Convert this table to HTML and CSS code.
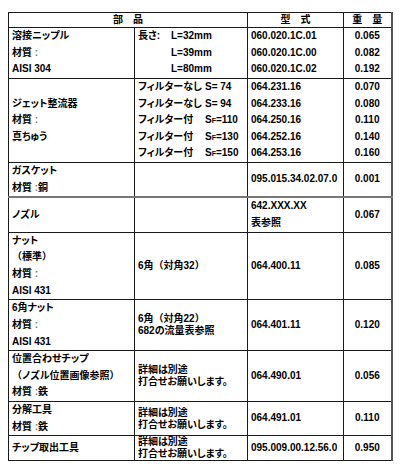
FILE: index.html
```html
<!DOCTYPE html>
<html lang="ja">
<head>
<meta charset="utf-8">
<link rel="stylesheet" href="styles.css">
</head>
<body>
<div class="page">
<table class="spec">
  <colgroup>
    <col class="c-part"><col class="c-desc"><col class="c-model"><col class="c-wt">
  </colgroup>
  <thead>
    <tr><th colspan="2">部　品</th><th>型　式</th><th>重　量</th></tr>
  </thead>
  <tbody>
    <tr>
      <td><div class="ln">溶接ニップル</div><div class="ln">材質<span class="colon"> :</span></div><div class="ln">AISI 304</div></td>
      <td>
        <div class="ln pair"><span class="k1">長さ:</span><span>L=32mm</span></div>
        <div class="ln pair"><span class="k1"></span><span>L=39mm</span></div>
        <div class="ln pair"><span class="k1"></span><span>L=80mm</span></div>
      </td>
      <td><div class="ln">060.020.1C.01</div><div class="ln">060.020.1C.00</div><div class="ln">060.020.1C.02</div></td>
      <td class="wt"><div class="ln">0.065</div><div class="ln">0.082</div><div class="ln">0.192</div></td>
    </tr>
    <tr>
      <td><div class="ln">ジェット整流器</div><div class="ln">材質<span class="colon"> :</span></div><div class="ln">真ちゅう</div></td>
      <td>
        <div class="ln pair"><span class="k2">フィルターなし</span><span>S= 74</span></div>
        <div class="ln pair"><span class="k2">フィルターなし</span><span>S= 94</span></div>
        <div class="ln pair"><span class="k2">フィルター付</span><span>S<span class="sf">F</span>=110</span></div>
        <div class="ln pair"><span class="k2">フィルター付</span><span>S<span class="sf">F</span>=130</span></div>
        <div class="ln pair"><span class="k2">フィルター付</span><span>S<span class="sf">F</span>=150</span></div>
      </td>
      <td><div class="ln">064.231.16</div><div class="ln">064.233.16</div><div class="ln">064.250.16</div><div class="ln">064.252.16</div><div class="ln">064.253.16</div></td>
      <td class="wt"><div class="ln">0.070</div><div class="ln">0.080</div><div class="ln">0.110</div><div class="ln">0.140</div><div class="ln">0.160</div></td>
    </tr>
    <tr class="gray-bottom">
      <td><div class="ln">ガスケット</div><div class="ln">材質<span class="colon"> :</span>銅</div></td>
      <td></td>
      <td><div class="ln">095.015.34.02.07.0</div></td>
      <td class="wt"><div class="ln">0.001</div></td>
    </tr>
    <tr>
      <td><div class="ln">ノズル</div></td>
      <td></td>
      <td><div class="ln">642.XXX.XX</div><div class="ln">表参照</div></td>
      <td class="wt"><div class="ln">0.067</div></td>
    </tr>
    <tr>
      <td><div class="ln">ナット</div><div class="ln"><span class="fw">（</span>標準<span class="fw">）</span></div><div class="ln">材質<span class="colon"> :</span></div><div class="ln">AISI 431</div></td>
      <td><div class="ln">6角<span class="fw">（</span>対角32<span class="fw">）</span></div></td>
      <td><div class="ln">064.400.11</div></td>
      <td class="wt"><div class="ln">0.085</div></td>
    </tr>
    <tr>
      <td><div class="ln">6角ナット</div><div class="ln">材質<span class="colon"> :</span></div><div class="ln">AISI 431</div></td>
      <td><div class="wrap">6角<span class="fw">（</span>対角22<span class="fw">）</span><br>682の流量表参照</div></td>
      <td><div class="ln">064.401.11</div></td>
      <td class="wt"><div class="ln">0.120</div></td>
    </tr>
    <tr>
      <td><div class="ln">位置合わせチップ</div><div class="ln"><span class="fw">（</span>ノズル位置画像参照<span class="fw">）</span></div><div class="ln">材質<span class="colon"> :</span>鉄</div></td>
      <td><div class="wrap">詳細は別途<br>打合せお願いします。</div></td>
      <td><div class="ln">064.490.01</div></td>
      <td class="wt"><div class="ln">0.056</div></td>
    </tr>
    <tr>
      <td><div class="ln">分解工具</div><div class="ln">材質<span class="colon"> :</span>鉄</div></td>
      <td><div class="wrap">詳細は別途<br>打合せお願いします。</div></td>
      <td><div class="ln">064.491.01</div></td>
      <td class="wt"><div class="ln">0.110</div></td>
    </tr>
    <tr>
      <td><div class="ln">チップ取出工具</div></td>
      <td><div class="wrap">詳細は別途<br>打合せお願いします。</div></td>
      <td><div class="ln">095.009.00.12.56.0</div></td>
      <td class="wt"><div class="ln">0.950</div></td>
    </tr>
  </tbody>
</table>
</div>
</body>
</html>
```
FILE: styles.css
```css
html, body {
  margin: 0;
  padding: 0;
  background: #ffffff;
}
.page {
  padding: 12px 0 0 8px;
}
.spec {
  border-collapse: collapse;
  table-layout: fixed;
  width: 383px;
  font-family: "Liberation Sans", "Noto Sans CJK JP", sans-serif;
  font-feature-settings: "palt";
  font-size: 10px;
  font-weight: 700;
  color: #000;
}
.c-part { width: 126px; }
.c-desc { width: 113px; }
.c-model { width: 96px; }
.c-wt { width: 48px; }
.spec th, .spec td {
  border: 1px solid #1a1a1a;
  padding: 0 0 0 3px;
  vertical-align: middle;
  text-align: left;
  white-space: nowrap;
  overflow: hidden;
}
.spec th {
  height: 14px;
  line-height: 14px;
  text-align: center;
  padding: 0;
  font-size: 10px;
}
.spec td.wt {
  text-align: center;
  padding: 0;
}
.spec th:last-child, .spec td.wt { border-right: 2px solid #555; }
.gray-bottom td { border-bottom: 2px solid #777; }
.ln {
  height: 16.65px;
  line-height: 16.65px;
}
.pair {
  display: grid;
  grid-template-columns: auto 1fr;
}
.k1 { width: 33px; }
.k2 { width: 67px; }
.sf {
  font-size: 7px;
}
.fw {
  font-feature-settings: normal;
}
.colon {
  color: #777;
}
.wrap {
  line-height: 12px;
}
```
